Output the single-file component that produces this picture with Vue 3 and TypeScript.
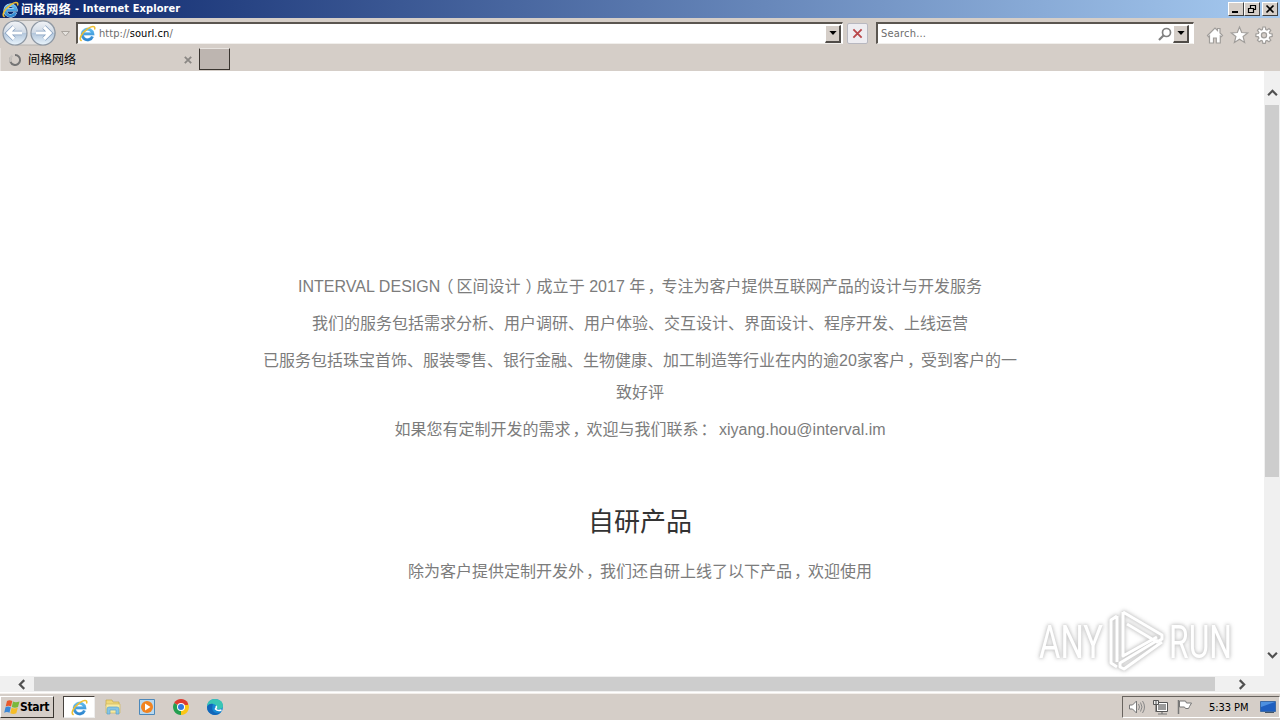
<script setup lang="ts">
interface Line { text: string; cls: string }
const about: Line[] = [
  { text: 'INTERVAL DESIGN（区间设计）成立于 2017 年，专注为客户提供互联网产品的设计与开发服务', cls: 'l1' },
  { text: '我们的服务包括需求分析、用户调研、用户体验、交互设计、界面设计、程序开发、上线运营', cls: 'l2' },
  { text: '已服务包括珠宝首饰、服装零售、银行金融、生物健康、加工制造等行业在内的逾20家客户，受到客户的一致好评', cls: 'l3' },
  { text: '如果您有定制开发的需求，欢迎与我们联系： xiyang.hou@interval.im', cls: 'l4' },
]
const tail = '除为客户提供定制开发外，我们还自研上线了以下产品，欢迎使用'
const split = (s: string): string[] => s.split(/([，：（）])/)
const isPunct = (s: string): boolean => /^[，：（）]$/.test(s)
</script>

<template>
  <div class="screen">
    <svg class="defs" width="0" height="0">
      <defs>
        <linearGradient id="eb" x1="0" y1="0" x2="0" y2="1"><stop offset="0" stop-color="#5db9ee" /><stop offset="1" stop-color="#2f86cf" /></linearGradient>
        <linearGradient id="nav" x1="0" y1="0" x2="0" y2="1"><stop offset="0" stop-color="#f2f4f7" /><stop offset=".48" stop-color="#cfd9e5" /><stop offset=".52" stop-color="#b4c7dc" /><stop offset="1" stop-color="#eaf5fd" /></linearGradient>
        <symbol id="ie" viewBox="0 0 16 16">
          <path d="M12.700 10.800A5 5 0 1 1 13 8.300H4.500" fill="none" stroke="#dceffa" stroke-width="3.300" />
          <path d="M12.700 10.800A5 5 0 1 1 13 8.300H4.500" fill="none" stroke="url(#eb)" stroke-width="2.600" />
          <path d="M2 14.500C-.5 13.500 2.700 7.300 8 3.600 11.700 1 15.400.3 14.800 3.700" fill="none" stroke="#eebf32" stroke-width="1.500" stroke-linecap="round" />
        </symbol>
      </defs>
    </svg>

    <header class="title">
      <svg class="ie18" viewBox="0 0 16 16"><use href="#ie" /></svg>
      <span class="tcn">间格网络</span><span class="ten">- Internet Explorer</span>
      <div class="wbtns">
        <i><svg viewBox="0 0 14 12"><path d="M3 9h6" stroke="#000" stroke-width="2" /></svg></i>
        <i><svg viewBox="0 0 14 12"><path d="M5.500 5V2.500h5v4H9M5 2.500h6M3.500 5.500h5v4h-5zM3 5.500h6" fill="none" stroke="#000" stroke-width="1.200" /></svg></i>
        <i class="gap"><svg viewBox="0 0 14 12"><path d="M3.500 2.500l7 7m0-7l-7 7" stroke="#000" stroke-width="1.700" /></svg></i>
      </div>
    </header>

    <div class="tools">
      <svg class="nav" viewBox="0 0 74 30">
        <path d="M14 2.500H44Q50 2.500 54 9Q57 15 54 20Q50 27 43 27H15" fill="#e2e0df" stroke="#b5b2ae" />
        <circle cx="15" cy="15" r="12" fill="url(#nav)" stroke="#8d97a3" stroke-width="1.200" />
        <circle cx="43" cy="15" r="12" fill="url(#nav)" stroke="#8d97a3" stroke-width="1.200" />
        <path d="M22 15H9M14 9L8 15l6 6" fill="none" stroke="#86a0c0" stroke-width="4.600" />
        <path d="M22 15H9M14 9L8 15l6 6" fill="none" stroke="#fff" stroke-width="3.200" />
        <path d="M36 15H49M44 9L50 15l-6 6" fill="none" stroke="#86a0c0" stroke-width="4.600" />
        <path d="M36 15H49M44 9L50 15l-6 6" fill="none" stroke="#fff" stroke-width="3.200" />
        <path d="M61.500 13.500h8l-4 4.500z" fill="#e5e2de" stroke="#aaa49e" />
      </svg>
      <div class="field addr">
        <svg class="ie17" viewBox="0 0 16 16"><use href="#ie" /></svg>
        <span class="url">http://<b>sourl.cn</b>/</span>
        <i class="drop"><svg viewBox="0 0 9 5"><path d="M0 0h9L4.500 5z" /></svg></i>
      </div>
      <div class="stop"><svg viewBox="0 0 12 12"><path d="M1.500 1.500l9 9m0-9l-9 9" stroke="#b9474a" stroke-width="2" /></svg></div>
      <div class="field search">
        <span class="ph">Search...</span>
        <svg class="mag" viewBox="0 0 14 14"><circle cx="8.500" cy="5.500" r="4" fill="none" stroke="#808080" stroke-width="1.700" /><path d="M5.700 8.300L1 13" stroke="#808080" stroke-width="2.200" /></svg>
        <i class="drop d2"><svg viewBox="0 0 9 5"><path d="M0 0h9L4.500 5z" /></svg></i>
      </div>
      <svg class="acts" viewBox="0 0 70 20">
        <g fill="#fff" stroke="#a09d9a" stroke-width="1.200">
          <path d="M1.500 10.500L9 3l2.500 2.500V3.500h2.500v4.500l2.500 2.500-1.300 1.300-.9-.8v7h-4v-5H7.500v5h-4v-7l-.8.800z" />
          <path d="M33.500 2l2.200 5.500 6 .4-4.600 3.700 1.500 5.900-5.100-3.200-5.100 3.200 1.500-5.900-4.600-3.700 6-.4z" />
          <path d="M56.400 4.500l.5-2.500h2.400l.5 2.500 1.200.5 2-1.500 1.800 1.800-1.500 2 .5 1.200 2.400.500v2.400l-2.400.500-.5 1.200 1.500 2-1.800 1.700-2-1.400-1.200.5-.5 2.400h-2.400l-.5-2.400-1.200-.5-2 1.400-1.800-1.700 1.500-2-.5-1.200-2.500-.5V9l2.500-.500.5-1.200-1.500-2 1.800-1.800 2 1.500z" />
          <circle cx="58" cy="10.200" r="2.600" fill="#d5cec8" />
        </g>
      </svg>
    </div>

    <div class="tabs">
      <div class="tab">
        <svg class="spin" viewBox="0 0 14 14"><path d="M7 2a5 5 0 1 1-4.500 3" fill="none" stroke="#747474" stroke-width="2" /><path d="M2.500 9A5 5 0 0 1 4.500 2.700" fill="none" stroke="#c5c1bd" stroke-width="2.200" /></svg>
        <span>间格网络</span>
        <svg class="x" viewBox="0 0 8 8"><path d="M.8.800l6.400 6.400m0-6.400L.8 7.200" stroke="#8a8784" stroke-width="1.800" /></svg>
      </div>
      <div class="newtab"></div>
    </div>

    <div class="view">
      <main>
        <p v-for="l in about" :key="l.cls" :class="l.cls"><template v-for="(s, i) in split(l.text)" :key="i"><span v-if="isPunct(s)" class="pc" :class="{ mid: s === '，' || s === '：' }">{{ s }}</span><template v-else>{{ s }}</template></template></p>
        <h2>自研产品</h2>
        <p class="tail"><template v-for="(s, i) in split(tail)" :key="i"><span v-if="isPunct(s)" class="pc mid">{{ s }}</span><template v-else>{{ s }}</template></template></p>
        <svg class="mark" viewBox="0 0 220 80">
          <g class="mk">
            <text x="19" y="58" textLength="64" lengthAdjust="spacingAndGlyphs">ANY</text>
            <text x="149" y="58" textLength="63" lengthAdjust="spacingAndGlyphs">RUN</text>
            <g fill="none" stroke="#fff" stroke-width="3" stroke-linejoin="round">
              <path d="M103 12L142 35v4l-5 3-30-18M103 12v44l34-19" />
              <path d="M97 16L91 20v43l6 4M97 16v46M142 42L104 69l-4-2v-4l38-23" />
            </g>
          </g>
        </svg>
      </main>
      <div class="vs">
        <svg viewBox="0 0 10 7"><path d="M1 5.500l4-4 4 4" /></svg>
        <div class="vthumb"></div>
        <svg class="dn" viewBox="0 0 10 7"><path d="M1 1.500l4 4 4-4" /></svg>
      </div>
    </div>
    <div class="hs">
      <svg class="lf" viewBox="0 0 8 10"><path d="M6.500 1L2.500 5l4 4" /></svg>
      <div class="hthumb"></div>
      <svg class="rt" viewBox="0 0 8 10"><path d="M1.500 1l4 4-4 4" /></svg>
    </div>

    <footer class="task">
      <div class="start">
        <svg viewBox="0 0 16 16"><path d="M3 2q2.500-1.500 5.300 0L7 7.500q-2.500-1.500-5.300 0z" fill="#e8592b" /><path d="M9 2.500q2.500 1.500 6.500 0l-1.500 5.500Q11 9.300 7.800 8z" fill="#7ab83b" /><path d="M1.500 8.300q2.500-1.500 5.300 0l-1.300 5.500q-2.500-1.500-5.300 0z" fill="#3b88d8" /><path d="M7.600 8.800q2.500 1.500 6.200 0l-1.500 5.400q-3 1.500-6 0z" fill="#f5bd28" /></svg>
        <b>Start</b>
      </div>
      <div class="act"><svg class="ie18b" viewBox="0 0 16 16"><use href="#ie" /></svg></div>
      <svg class="ti" viewBox="0 0 18 18"><path d="M2 2h6l1 2h6v4H2z" fill="#efd778" stroke="#c7aa4b" stroke-width=".7" /><path d="M2 6h14v9H2z" fill="#f8eaa0" stroke="#d0b75f" stroke-width=".7" /><path d="M3 16v-5q0-2 2-2h8q2 0 2 2v5h-3v-4H6v4z" fill="#86c5e5" stroke="#5da5cd" stroke-width=".7" /></svg>
      <svg class="ti" viewBox="0 0 18 18"><path d="M1.500 1.500h15v15h-15z" fill="#b8d8ef" stroke="#4c88ba" /><circle cx="9" cy="9" r="6" fill="#f18320" /><path d="M7 5.500v7l5.500-3.500z" fill="#fff" /></svg>
      <svg class="ti" viewBox="0 0 18 18"><path d="M9 9L2.100 5A8 8 0 0 1 15.900 5z" fill="#df3b2f" /><path d="M9 9L15.900 5A8 8 0 0 1 9 17z" fill="#fbc616" /><path d="M9 9v8A8 8 0 0 1 2.100 5z" fill="#249f50" /><path d="M8 5h7.900v2H8z" fill="#df3b2f" /><circle cx="9" cy="9" r="4" fill="#fff" /><circle cx="9" cy="9" r="3" fill="#3278df" /></svg>
      <svg class="ti" viewBox="0 0 18 18"><circle cx="9" cy="9" r="8" fill="#1689d4" /><path d="M1 8Q2 1 9 1q8 .5 8 7 0 3-4 3h-3q1-2 0-3.500Q7 4 1 8z" fill="#39c6b4" /><path d="M1 9q2-4 6-3-2 5 1 8 3 2 7 0-3 4-8 2.700Q1 15 1 9z" fill="#1266b9" /><path d="M10 8q1 1-.5 3 2 2.300 6 1" fill="none" stroke="#fff" stroke-width="1.600" /></svg>
      <div class="tray">
        <svg class="i1" viewBox="0 0 18 16"><path d="M1.500 6v4h3l4 4V2l-4 4z" fill="#fff" stroke="#777" /><path d="M10.500 5q2 3 0 6M12.500 3.500q3 4.500 0 9M14.500 2q4 6 0 12" fill="none" stroke="#888" /></svg>
        <svg class="i2" viewBox="0 0 18 16"><path d="M4.500 3.500h11v9h-11z" fill="#fff" stroke="#555" /><path d="M6 5h8v6H6z" fill="#9a9a9a" /><path d="M10 13v2M6 15h9" fill="none" stroke="#777" stroke-width="1.200" /><path d="M1.500 1.500h5v4h-5z" fill="#eee" stroke="#555" /><path d="M4 1v4M4 6v7" stroke="#555" /></svg>
        <svg class="i3" viewBox="0 0 18 16"><path d="M2.500 1v14" stroke="#777" stroke-width="1.500" /><path d="M3.500 2h6l1 2h5l-2 3.500-1 2h-3l-1-1.500h-5z" fill="#fff" stroke="#777" /></svg>
        <span class="clock">5:33 PM</span>
        <svg class="i4" viewBox="0 0 16 14"><path d="M.5 1.500h15v10H.5z" fill="#1f5fc0" stroke="#3d6aa5" /><path d="M1 2h14L1 7z" fill="#4d90e0" /><path d="M5 12.500h9" stroke="#456" /></svg>
      </div>
    </footer>
  </div>
</template>

<style>
html, body { margin: 0; overflow: hidden; }
</style>
<style scoped>
* { box-sizing: border-box; }
.screen { width: 1280px; height: 720px; background: #d5cec8; font: 11px "DejaVu Sans Condensed", "DejaVu Sans", "Noto Sans CJK SC", sans-serif; display: flex; flex-direction: column; overflow: hidden; color: #000; }
svg { display: block; flex: none; }
.defs { position: absolute; }
.title { height: 18px; flex: none; display: flex; align-items: center; padding-left: 2px; background: linear-gradient(90deg, #0a246a, #a6caf0); color: #fff; font-weight: bold; white-space: nowrap; }
.ie18 { width: 17px; height: 17px; }
.tcn { font: bold 12px/18px "Noto Sans CJK SC", sans-serif; margin-left: 2px; width: 54px; letter-spacing: .6px; }
.ten { line-height: 18px; letter-spacing: .1px; }
.wbtns { margin-left: auto; margin-right: 2px; display: flex; }
.wbtns i { width: 16px; height: 14px; background: #d5cec8; border: 1px solid; border-color: #fff #404040 #404040 #fff; }
.wbtns svg { width: 14px; height: 12px; }
.wbtns .gap { margin-left: 2px; }
.tools { height: 30px; flex: none; display: flex; align-items: flex-start; }
.nav { width: 74px; height: 30px; margin-right: 2px; }
.field { margin-top: 4px; height: 22px; background: #fff; border: 1px solid; border-color: #5b5650 #fff #f1efec #5b5650; border-top-width: 2px; border-left-width: 2px; display: flex; align-items: center; font-size: 11px; color: #6d6d6d; }
.addr { width: 767px; }
.ie17 { width: 17px; height: 17px; margin-left: 1px; margin-top: -1px; }
.url { margin-left: 3px; letter-spacing: .06px; }
.url b { font-weight: normal; color: #000; }
.drop { margin-left: auto; margin-right: 1px; width: 16px; height: 18px; background: #d5cec8; border: 1px solid; border-color: #fff #504c48 #504c48 #fff; border-right-width: 2px; border-bottom-width: 2px; display: flex; align-items: center; justify-content: center; }
.drop svg { width: 8px; height: 4px; }
.stop { width: 21px; height: 21px; margin: 5px 8px 0 4px; border: 1px solid #b8b8c0; background: #eeedf1; border-radius: 2px; display: flex; align-items: center; justify-content: center; }
.stop svg { width: 11px; height: 11px; }
.search { width: 318px; }
.ph { margin-left: 3px; letter-spacing: .2px; }
.mag { width: 14px; height: 14px; margin-left: auto; margin-right: 1px; }
.d2 { margin: 0 4px 0 0; }
.acts { width: 70px; height: 20px; margin: 7px 0 0 12px; }
.tabs { height: 23px; flex: none; display: flex; }
.tab { width: 199px; display: flex; align-items: center; padding-left: 7px; border-left: 1px solid #e5e0dc; }
.tab span { font: 12px/18px "Noto Sans CJK SC", sans-serif; margin-left: 6px; margin-top: -1px; }
.spin { width: 14px; height: 14px; }
.x { width: 8px; height: 8px; margin-left: auto; margin-right: 7px; }
.newtab { width: 31px; height: 22px; background: #bdb5b0; border: 1px solid #39342f; border-top-color: #e8e4e0; }
.view { height: 605px; flex: none; display: flex; background: #fff; }
main { width: 1264px; padding: 200px 0 0 16px; position: relative; text-align: center; font: 16px/32px "Liberation Sans", "Noto Sans CJK SC", sans-serif; color: #7c7c7c; }
main p { width: 768px; margin: 0 auto 5px; }
.l1, .l2 { white-space: nowrap; }
.l1 { letter-spacing: .03px; }
.pc { font-family: "Noto Sans CJK SC", sans-serif; font-feature-settings: "halt"; line-height: 1; padding: 0 3px 0 5px; }
.mid { padding: 0 6px 0 2px; }
h2 { margin: 53px 0 15px; font: 26px/42px "Noto Sans CJK SC", sans-serif; color: #333; }
.mark { position: absolute; left: 1020px; top: 529px; width: 220px; height: 80px; overflow: visible; }
.mk { filter: drop-shadow(0 0 1.500px #ccc) drop-shadow(0 0 2px #ccc); }
.mk text { font: 400 47px "Roboto", sans-serif; fill: #fff; }
.vs { width: 16px; background: #f0f0f0; display: flex; flex-direction: column; align-items: center; padding-top: 18px; }
.vs svg { width: 11px; height: 8px; fill: none; stroke: #505050; stroke-width: 2; }
.vthumb { width: 14px; height: 372px; margin-top: 8px; background: #cdcdcd; }
.vs .dn { margin-top: 174px; }
.hs { height: 17px; flex: none; background: #f0f0f0; border-bottom: 1px solid #fff; display: flex; align-items: center; }
.hs svg { width: 9px; height: 11px; fill: none; stroke: #505050; stroke-width: 2; }
.lf { margin: 0 8px 0 17px; }
.hthumb { width: 1181px; height: 14px; background: #cdcdcd; }
.rt { margin-left: 23px; }
.task { height: 27px; flex: none; border-top: 1px solid #f3efeb; display: flex; align-items: center; background: #d5cec8; }
.start { width: 54px; height: 22px; border: 1px solid; border-color: #fff #38342f #38342f #fff; display: flex; align-items: center; padding-left: 3px; }
.start svg { width: 16px; height: 16px; }
.start b { font-size: 12px; letter-spacing: -.3px; }
.act { width: 32px; height: 22px; margin: 0 10px 0 9px; background: #fff; border: 1px solid; border-color: #47423e #eee #eee #47423e; display: flex; align-items: center; justify-content: center; }
.ie18b { width: 17px; height: 17px; }
.ti { width: 18px; height: 18px; margin-right: 16px; }
.act + .ti { margin-left: -1px; }
.tray { margin-left: auto; width: 158px; height: 22px; border: 1px solid; border-color: #69645f #fff #fff #69645f; display: flex; align-items: center; padding-left: 5px; }
.i1, .i2, .i3 { width: 18px; height: 16px; margin-right: 6px; }
.clock { margin-left: 9px; width: 49px; letter-spacing: -.05px; white-space: nowrap; }
.i4 { width: 16px; height: 14px; margin-left: 2px; }
</style>
